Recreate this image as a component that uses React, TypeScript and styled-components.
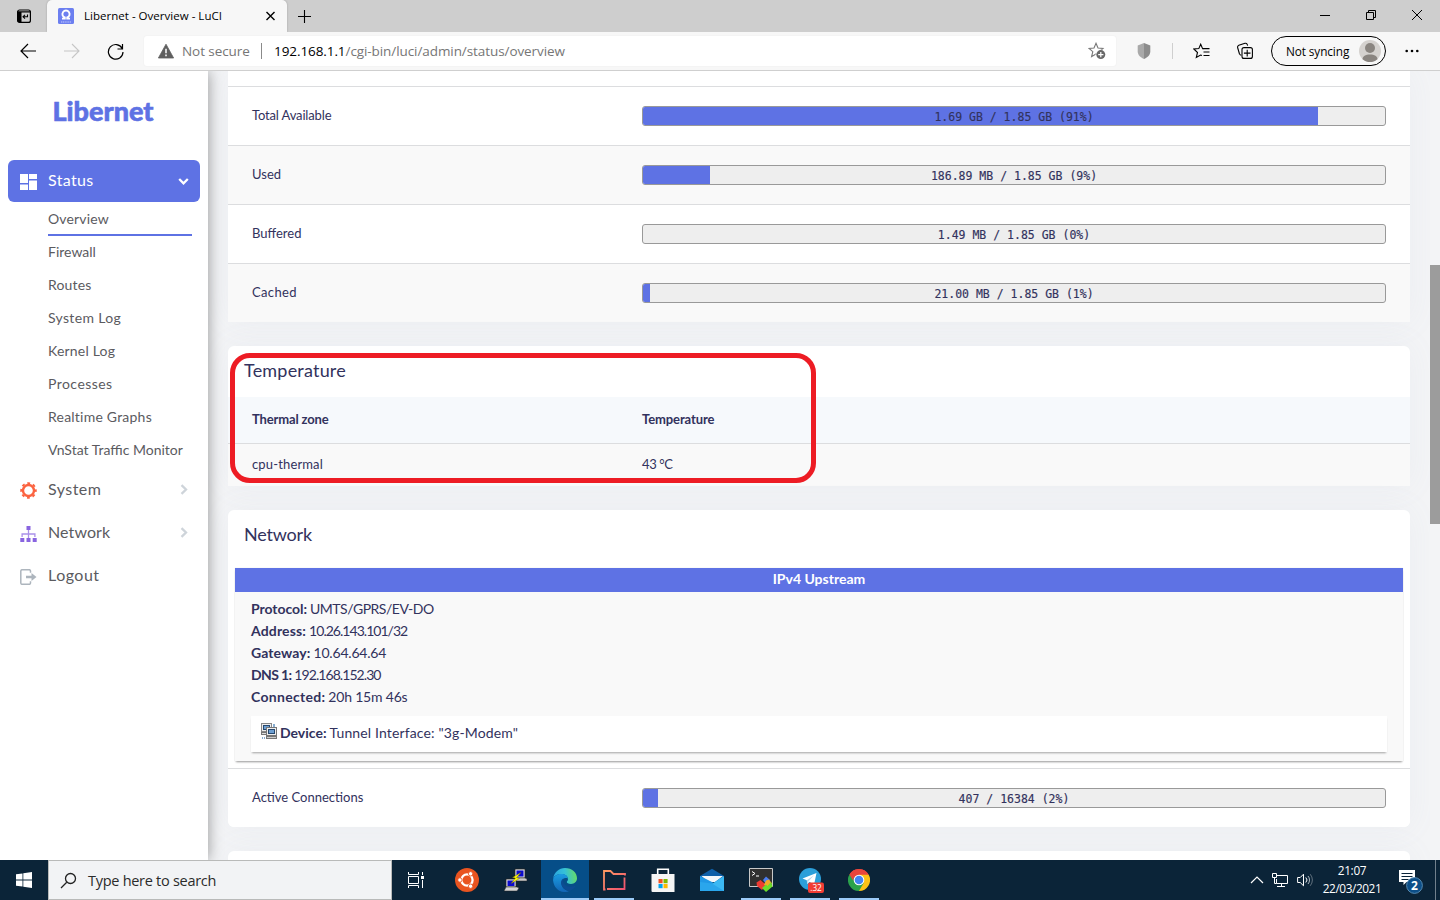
import React from "react";
import styled, { createGlobalStyle } from "styled-components";

const UI = `"Open Sans", "Noto Sans", sans-serif`;
const BRAND = "#5e72e4";

const Global = createGlobalStyle`
  * { box-sizing: border-box; }
  body { margin: 0; overflow: hidden; }
  #root { width: 1440px; height: 900px; }
  svg { display: block; flex: none; }
`;

const Screen = styled.div`
  width: 1440px;
  height: 900px;
  display: flex;
  flex-direction: column;
  overflow: hidden;
  font-family: ${UI};
  color: #000;
`;

/* ---------- text helper ---------- */
const Text = styled.span<{ $ls?: number }>`
  white-space: nowrap;
  letter-spacing: ${(p) => p.$ls ?? 0}px;
`;

/* ---------- browser chrome ---------- */
const TabStrip = styled.header`
  flex: none;
  height: 32px;
  background: #cecece;
  display: flex;
  align-items: flex-start;
`;
const TabActions = styled.div`
  width: 47px;
  height: 32px;
  display: flex;
  align-items: center;
  justify-content: center;
`;
const Tab = styled.div`
  width: 240px;
  height: 32px;
  border-radius: 5px 5px 0 0;
  background: #f7f7f7;
  box-shadow: 0 0 2px rgba(0, 0, 0, 0.25);
  clip-path: inset(-2px -2px 0 -2px);
  display: flex;
  align-items: center;
  padding: 0 11px 0 11px;
  font-size: 11.5px;
`;
const TabTitle = styled(Text)`
  flex: 1;
  margin: -2px 0 0 10px;
`;
const NewTab = styled.div`
  width: 35px;
  height: 32px;
  display: flex;
  align-items: center;
  justify-content: center;
`;
const WindowButtons = styled.div`
  margin-left: auto;
  display: flex;
  height: 29px;
`;
const WindowButton = styled.div`
  width: 46px;
  display: flex;
  align-items: center;
  justify-content: center;
`;
const Toolbar = styled.div`
  flex: none;
  height: 39px;
  background: #f7f7f7;
  border-bottom: 1px solid #cfcfcf;
  display: flex;
  align-items: center;
`;
const ToolIcon = styled.div<{ $w: number }>`
  width: ${(p) => p.$w}px;
  height: 30px;
  display: flex;
  align-items: center;
  justify-content: center;
`;
const NavButtons = styled.div`
  width: 144px;
  padding-left: 6px;
  display: flex;
`;
const AddressBar = styled.div`
  width: 972px;
  height: 30px;
  background: #fff;
  border-radius: 3px;
  box-shadow: 0 0 2px rgba(0, 0, 0, 0.06);
  display: flex;
  align-items: center;
  padding: 0 10px 0 14px;
  font-size: 13.5px;
  color: #767676;
  b { font-weight: 400; color: #000; }
`;
const Insecure = styled(Text)`
  margin-left: 8px;
  width: 80px;
  line-height: 16px;
  border-right: 1px solid #8a8a8a;
`;
const Url = styled(Text)`
  flex: 1;
  margin-left: 12px;
`;
const ToolDivider = styled.div`
  width: 1px;
  height: 16px;
  background: #cfcfcf;
`;
const Profile = styled.div`
  width: 115px;
  height: 30px;
  border: 1px solid #000;
  border-radius: 15px;
  display: flex;
  align-items: center;
  justify-content: space-between;
  padding: 0 4px 0 14px;
  font-size: 11.8px;
  > span { margin-top: -1px; }
`;

/* ---------- page ---------- */
const Page = styled.div`
  height: 789px;
  flex: none;
  display: flex;
  background: #f3f4f6;
  overflow: hidden;
  font-family: Lato, sans-serif;
`;
const Sidebar = styled.aside`
  width: 208px;
  flex: none;
  background: #fff;
  box-shadow: 0 0 14px rgba(0, 0, 0, 0.4);
  padding: 0 8px;
  z-index: 1;
`;
const Brand = styled.div`
  height: 89px;
  padding: 24px 2px 0 0;
  text-align: center;
  font: 900 27px/32px Lato, sans-serif;
  color: ${BRAND};
  -webkit-text-stroke: 0.6px ${BRAND};
`;
const MenuItem = styled.div<{ $active?: boolean }>`
  height: ${(p) => (p.$active ? 42 : 43)}px;
  border-radius: 6px;
  background: ${(p) => (p.$active ? BRAND : "transparent")};
  color: ${(p) => (p.$active ? "#fff" : "#5b5b5f")};
  display: flex;
  align-items: center;
  padding: 0 11px 0 12px;
  font-size: 16px;
  svg:first-child { margin-top: 2px; }
`;
const MenuLabel = styled(Text)`
  flex: 1;
  margin: -3px 0 0 11px;
`;
const SubMenu = styled.nav`
  padding: 1px 0 1px 40px;
`;
const SubItem = styled.div<{ $active?: boolean }>`
  width: 144px;
  height: 33px;
  line-height: 32px;
  font-size: 14px;
  color: #5b5b5f;
  border-bottom: 2px solid ${(p) => (p.$active ? BRAND : "transparent")};
`;
const Main = styled.main`
  width: 1222px;
  flex: none;
  padding: 0 20px;
  display: flex;
  flex-direction: column;
  gap: 24px;
  color: #32325d;
`;
const Card = styled.section<{ $flatTop?: boolean; $flatBottom?: boolean }>`
  flex: none;
  overflow: hidden;
  background: #fff;
  border-radius: ${(p) => {
    const top = p.$flatTop ? "0 0" : "6px 6px";
    const bottom = p.$flatBottom ? "0 0" : "6px 6px";
    return `${top} ${bottom}`;
  }};
  box-shadow: 0 0 32px rgba(136, 152, 190, 0.07);
`;
const CardTitle = styled.h3<{ $h: number }>`
  margin: 0;
  height: ${(p) => p.$h}px;
  padding-left: 16px;
  font-size: 18px;
  font-weight: 400;
  line-height: 48px;
`;
const Row = styled.div<{ $alt?: boolean; $h?: number; $head?: boolean }>`
  height: ${(p) => p.$h ?? 59}px;
  border-top: ${(p) => (p.$head ? "0" : "1px solid #dcdddf")};
  background: ${(p) => (p.$head ? "#f6f9fc" : p.$alt ? "#f9f9f9" : "#fff")};
  font-weight: ${(p) => (p.$head ? 700 : 400)};
  font-size: 13px;
  display: grid;
  grid-template-columns: 390px 744px;
  align-items: center;
  padding: 0 24px;
  > span { margin-top: -2px; }
`;
const RowSpacer = styled.div`
  height: 15px;
`;
const Bar = styled.div`
  height: 20px;
  border: 1px solid #999;
  border-radius: 3px;
  background: #eee;
  display: grid;
  overflow: hidden;
  > * { grid-area: 1 / 1; }
`;
const Fill = styled.div`
  background: ${BRAND};
`;
const BarText = styled.div`
  text-align: center;
  font: 11.5px/20px "DejaVu Sans Mono", monospace;
  -webkit-text-stroke: 0.15px currentColor;
`;
const IfaceBox = styled.div`
  margin: 0 7px 7px;
  height: 193px;
  background: #f9f9f9;
  box-shadow: 0 2px 2px -1px rgba(0, 0, 0, 0.4), 0 0 1px rgba(0, 0, 0, 0.12);
`;
const IfaceHead = styled.div`
  height: 24px;
  line-height: 22px;
  background: ${BRAND};
  color: #fff;
  text-align: center;
  font-weight: 700;
  font-size: 14px;
`;
const IfaceBody = styled.div`
  padding: 6px 16px 0;
  font-size: 14px;
`;
const Info = styled.div`
  height: 22px;
  line-height: 22px;
  white-space: nowrap;
  display: flex;
  gap: 3px;
`;
const Key = styled(Text)`
  font-weight: 700;
`;
const Device = styled.div`
  margin-top: 8px;
  height: 36px;
  background: #fff;
  box-shadow: 0 2px 2px -1px rgba(0, 0, 0, 0.35);
  display: flex;
  align-items: center;
  padding-left: 10px;
  gap: 3px;
  svg { margin-top: -6px; }
  > span { margin-top: -3px; }
`;
const ScrollTrack = styled.div`
  width: 10px;
  flex: none;
  padding-top: 194px;
  background: #f3f4f6;
`;
const ScrollThumb = styled.div`
  height: 259px;
  background: #9c9c9c;
`;
const Marker = styled.div`
  position: absolute;
  left: 230px;
  top: 353px;
  width: 586px;
  height: 130px;
  border: 5px solid #ed1c24;
  border-radius: 20px;
  z-index: 3;
`;

/* ---------- taskbar ---------- */
const Taskbar = styled.footer`
  height: 40px;
  flex: none;
  background: #0b2438;
  display: flex;
  color: #fff;
  position: relative;
  z-index: 2;
`;
const TaskCell = styled.div<{ $w?: number; $active?: boolean; $open?: boolean }>`
  width: ${(p) => p.$w ?? 49}px;
  height: 40px;
  padding-right: ${(p) => (p.$w ? 0 : 1)}px;
  display: flex;
  align-items: center;
  justify-content: center;
  background: ${(p) =>
    p.$active
      ? "linear-gradient(#9ccbf8, #9ccbf8) 0 38px / 48px 2px no-repeat, linear-gradient(#064e88, #064e88) 0 0 / 48px 40px no-repeat"
      : p.$open
        ? "linear-gradient(#9ccbf8, #9ccbf8) 4px 38px / 40px 2px no-repeat"
        : "none"};
`;
const SearchBox = styled.div`
  width: 344px;
  height: 40px;
  background: #f2f3f5;
  border: 1px solid #b9bab9;
  display: flex;
  align-items: center;
  padding-left: 11px;
  gap: 11px;
  font-size: 14.5px;
  color: #2b2b2b;
`;
const Apps = styled.div`
  display: flex;
  padding-left: 3px;
`;
const Tray = styled.div`
  margin-left: auto;
  display: flex;
  align-items: center;
  padding-right: 4px;
`;
const TrayIcons = styled.div`
  display: flex;
  align-items: center;
  gap: 8px;
`;
const Clock = styled.div`
  width: 78px;
  padding: 0 2px 2px 0;
  text-align: center;
  font-size: 11.8px;
  line-height: 18px;
`;
const Notice = styled.div`
  width: 44px;
  padding: 4px 0 0 7px;
  border-right: 1px solid #71808c;
  height: 40px;
  display: flex;
  align-items: center;
`;

/* ---------- drawings ---------- */
const Line = ({ d, w = 24, h = 24, c = "#000", s = 1 }: { d: string; w?: number; h?: number; c?: string; s?: number }) => (
  <svg width={w} height={h} viewBox={`0 0 ${w} ${h}`} fill="none" stroke={c} strokeWidth={s}>
    <path d={d} />
  </svg>
);

const TabActionsIcon = () => (
  <svg width="16" height="16" viewBox="0 0 16 16">
    <rect x="1.6" y="2" width="12.8" height="12.4" rx="2" fill="none" stroke="#000" strokeWidth="1.2" />
    <path d="M1.5 3.2h13v1.3h-9v9.8H3a1.5 1.5 0 0 1-1.5-1.5z" />
    <path d="M11.5 6.5v2.2H7.2M9 6.8 7 8.7l2 1.9" fill="none" stroke="#000" strokeWidth="1.1" />
  </svg>
);
const Favicon = () => (
  <svg width="16" height="16" viewBox="0 0 16 16">
    <rect width="16" height="16" rx="1.5" fill="#6c7ff0" />
    <path d="M4 10.600h2.800V9.500a3.600 3.600 0 1 1 2.400 0v1.100H12" fill="none" stroke="#fff" strokeWidth="1.900" />
    <path d="M3 14h10" stroke="#c5ccff" strokeWidth="1.2" strokeDasharray="1.2 .6" />
  </svg>
);
const WarningIcon = () => (
  <svg width="16" height="16" viewBox="0 0 16 16">
    <path d="M8 1.2 15.6 15H.4z" fill="#5f5f5f" stroke="#5f5f5f" strokeLinejoin="round" strokeWidth=".8" />
    <path d="M8 5.8v4.4M8 11.6v1.6" stroke="#fff" strokeWidth="1.5" />
  </svg>
);
const STAR = "M8 1.3 10 6l5 .4-3.8 3.3 1.2 4.9L8 12l-4.4 2.6 1.2-4.9L1 6.4 6 6z";
const StarAdd = () => (
  <svg width="18" height="18" viewBox="0 0 18 18">
    <path d={STAR} fill="none" stroke="#777" strokeWidth="1.1" />
    <circle cx="12.8" cy="12.6" r="5.2" fill="#fff" />
    <circle cx="12.8" cy="12.6" r="4.5" fill="#686868" />
    <path d="M12.8 10v5.2M10.2 12.6h5.2" stroke="#fff" strokeWidth="1.2" />
  </svg>
);
const Shield = () => (
  <svg width="14" height="16" viewBox="0 0 14 16">
    <path d="M7 0 .7 2.4v6C.7 12 4 14.700 7 16z" fill="#a9a9a9" />
    <path d="M7 0l6.300 2.400v6C13.300 12 10 14.700 7 16z" fill="#8c8c8c" />
  </svg>
);
const Favorites = () => (
  <svg width="17" height="16" viewBox="0 0 17 16" fill="none" stroke="#000" strokeWidth="1.1">
    <path d="M10.300 6 9.600 5.600 7.700 1.200 5.800 5.600l-5 .4 3.700 3.500-1.200 5 4.300-2.500L9 12.500" />
    <path d="M10 5.600h6.500M10.500 9h6M10.500 12.500h6" />
  </svg>
);
const Collections = () => (
  <svg width="18" height="18" viewBox="0 0 18 18" fill="none" stroke="#000" strokeWidth="1.1">
    <path d="M3.500 12 1.600 5.500a2 2 0 0 1 1.200-2.300L9 1.300a1.800 1.800 0 0 1 2.300 1.300l.3 1" />
    <path d="M3.500 12a3 3 0 0 0 1.800 1.200" />
    <rect x="6" y="5.600" width="10.400" height="10.800" rx="2" />
    <path d="M11.200 7.800v6.600M7.900 11.100h6.600" />
  </svg>
);
const Avatar = () => (
  <svg width="22" height="22" viewBox="0 0 22 22">
    <circle cx="11" cy="11" r="11" fill="#d5d2cf" />
    <circle cx="11" cy="8" r="5" fill="#8a8580" />
    <path d="M3.500 19.200c0-3 3-4.700 7.500-4.700s7.500 1.700 7.500 4.700a11 11 0 0 1-15 0z" fill="#8a8580" />
  </svg>
);
const Dashboard = () => (
  <svg width="17" height="16" viewBox="0 0 17 16" fill="#fff">
    <path d="M0 0h8v9H0zM9 0h8v5H9zM0 10.500h8V16H0zM9 6.500h8V16H9z" />
  </svg>
);
const Gear = () => (
  <svg width="17" height="17" viewBox="0 0 17 17" fill="none" stroke="#fb6340">
    <circle cx="8.500" cy="8.500" r="5.500" strokeWidth="2.400" />
    <circle cx="8.500" cy="8.500" r="7.300" strokeWidth="1.900" strokeDasharray="2.867 2.867" strokeDashoffset="1.430" />
  </svg>
);
const Sitemap = () => (
  <svg width="17" height="16" viewBox="0 0 17 16">
    <path d="M6.500 0h4v4h-4zM.3 12h4v4h-4zM6.500 12h4v4h-4zM12.700 12h4v4h-4z" fill="#8965e0" />
    <path d="M8.500 4v8M2.100 11V8h12.800v3" fill="none" stroke="#ab91e9" strokeWidth="1.300" />
  </svg>
);
const Exit = () => (
  <svg width="17" height="16" viewBox="0 0 17 16">
    <path d="M10.500 3.800V2a1.300 1.300 0 0 0-1.300-1.300H2A1.300 1.300 0 0 0 .8 2v12A1.300 1.300 0 0 0 2 15.300h7.200a1.300 1.300 0 0 0 1.300-1.300v-1.800" fill="none" stroke="#adb5bd" strokeWidth="1.500" />
    <path d="M6 6.800h5.500V4l5 4-5 4V9.200H6z" fill="#adb5bd" />
  </svg>
);
const DeviceIcon = () => (
  <svg width="16" height="16" viewBox="0 0 16 16" shapeRendering="crispEdges">
    <path d="M0 0h11v9H0z" fill="#888" />
    <path d="M1 1h9v7H1z" fill="#eee" />
    <path d="M2 2h7v5H2z" fill="#26486e" />
    <path d="M3 3h5v3H3z" fill="#6d9fd2" />
    <path d="M0 9h6v3H0z" fill="#777" />
    <path d="M1 10h5v1H1z" fill="#ddd" />
    <path d="M12 1h2v3h-2zM1 14h1v2H1zM3 14h1v2H3z" fill="#88aed2" />
    <path d="M5 4h11v9H5z" fill="#777" />
    <path d="M6 5h9v7H6z" fill="#eee" />
    <path d="M7 6h7v5H7z" fill="#26486e" />
    <path d="M8 7h5v3H8z" fill="#6d9fd2" />
    <path d="M5 13h11v3H5z" fill="#777" />
    <path d="M6 14h9v1H6z" fill="#ccc" />
  </svg>
);
const WinLogo = () => (
  <svg width="16" height="16" viewBox="0 0 16 16" fill="#fff">
    <path d="M0 2.300 6.500 1.400v6.200H0zM7.300 1.300 16 0v7.600H7.300zM0 8.400h6.500v6.200L0 13.700zM7.300 8.400H16V16l-8.700-1.300z" />
  </svg>
);
const TaskView = () => (
  <svg width="16" height="16" viewBox="0 0 16 16" fill="none" stroke="#fff" strokeWidth="1">
    <path d="M.5 0v2.500h10V0M.5 4.500h10v7H.5zM.5 16v-2.500h10V16M14.500 0v3M14.500 8v8" />
    <path d="M13 4h3v3h-3z" fill="#fff" stroke="none" />
  </svg>
);
const Ubuntu = () => (
  <svg width="24" height="24" viewBox="0 0 24 24">
    <circle cx="12" cy="12" r="12" fill="#e95420" />
    <circle cx="12" cy="12" r="5.600" fill="none" stroke="#fff" strokeWidth="2.300" />
    <g fill="#fff" stroke="#e95420" strokeWidth=".9">
      <circle cx="4.900" cy="12" r="2.200" />
      <circle cx="15.600" cy="5.800" r="2.200" />
      <circle cx="15.600" cy="18.200" r="2.200" />
    </g>
  </svg>
);
const Putty = () => (
  <svg width="24" height="24" viewBox="0 0 24 24">
    <path d="M11 1h10v9H11z" fill="#ddd" stroke="#222" strokeWidth=".7" />
    <path d="M12.500 2.500h7v6h-7z" fill="#0b0bcc" />
    <path d="M11 10h10l2 1v2H11z" fill="#c8c8c8" stroke="#222" strokeWidth=".5" />
    <path d="M2 11h10v8H2z" fill="#ddd" stroke="#222" strokeWidth=".7" />
    <path d="M3.500 12.500h7v5.500h-7z" fill="#0b0bcc" />
    <path d="M2 19h11l2 1-2 3H0l1-2z" fill="#d4d4d4" stroke="#222" strokeWidth=".5" />
    <path d="M17 4.500l-8.500 5 3 .6L7 15.500l8.500-5-3-.8z" fill="#ff0" stroke="#776600" strokeWidth=".4" />
  </svg>
);
const Edge = () => (
  <svg width="24" height="24" viewBox="0 0 24 24">
    <defs>
      <linearGradient id="eg1" x1="0" y1=".4" x2="1" y2=".3">
        <stop offset="0" stopColor="#2aa5e0" />
        <stop offset=".5" stopColor="#35c1d8" />
        <stop offset="1" stopColor="#68dc62" />
      </linearGradient>
      <linearGradient id="eg2" x1="0" y1="0" x2="0" y2="1">
        <stop offset="0" stopColor="#1b9de2" />
        <stop offset="1" stopColor="#1264b4" />
      </linearGradient>
    </defs>
    <path d="M.2 10.500C1 4.500 6 0 12 0c7 0 12 4.800 12 10.300 0 3.300-2.500 5.700-6 5.700-2.800 0-4.200-1-4.200-1.900 0-.6 1.200-1.200 1.200-3C15 8.500 12.500 6 8.500 6 4 6 1 8.300.2 10.500z" fill="url(#eg1)" />
    <path d="M.1 12.500C-.2 8.500 3.800 6 8.300 6c3.800 0 6.300 2 6.600 4.500-4-1.500-7 1.500-6.600 5.200.4 4.500 4.700 6.900 7.700 7.600C8.500 26 .8 21 .1 12.500z" fill="url(#eg2)" />
    <path d="M10 10.800c-2 1.300-2 3.700-1.500 5.700 1.300 4.400 5.500 6.600 9 6 2-.7 4-2.300 5-4.200.3-.6-.2-.8-.7-.5-6 2.800-13-.8-11.800-7z" fill="#0d4c92" />
  </svg>
);
const Folder = () => (
  <svg width="24" height="24" viewBox="0 0 24 24" fill="none">
    <defs>
      <linearGradient id="fg" x1="0" y1="0" x2="1" y2="1">
        <stop offset="0" stopColor="#ff9a62" />
        <stop offset="1" stopColor="#ef5070" />
      </linearGradient>
    </defs>
    <path d="M3.500 21.500H2V3h6.500l3 3H23V7.500M22.500 9.500v11.500H5" stroke="url(#fg)" strokeWidth="1.800" />
  </svg>
);
const Store = () => (
  <svg width="24" height="24" viewBox="0 0 24 24">
    <path d="M6.700 7V1.200h10.600V7" fill="none" stroke="#fff" strokeWidth="1.600" />
    <path d="M.5 6h23v18h-22a1 1 0 0 1-1-1z" fill="#f5f5f5" />
    <path d="M7.500 11H11.600v4.200H7.500z" fill="#f25022" />
    <path d="M12.500 11h4.100v4.200h-4.100z" fill="#7fba00" />
    <path d="M7.500 16h4.100v4.200H7.500z" fill="#00a4ef" />
    <path d="M12.500 16h4.100v4.200h-4.100z" fill="#ffb900" />
  </svg>
);
const Mail = () => (
  <svg width="24" height="24" viewBox="0 0 24 24">
    <path d="M0 8 12 .800 24 8v6H0z" fill="#0e5fa8" />
    <path d="M1.500 8h21.500L15 14H8z" fill="#f3f7fa" />
    <path d="M0 8l14 7L0 23z" fill="#2098e6" />
    <path d="M24 8v15H0l14-8.500z" fill="#3bb8f3" />
    <path d="M0 14l12 1.500L24 23H0z" fill="#2aa6ec" />
  </svg>
);
const Terminal = () => (
  <svg width="24" height="24" viewBox="0 0 24 24">
    <path d="M.5.500h23v18H.5z" fill="#303030" stroke="#c8c8c8" />
    <path d="M3 3.500l3 2-3 2M7 8h3" fill="none" stroke="#fff" />
    <path d="M14 12l3-3.500 4 3.500-4 4z" fill="#4b7df0" />
    <path d="M7.500 14.500 11.500 12l5.500 5-4 5-5-4z" fill="#ee3b32" />
    <path d="M17 12.500l3-1 3 4-5 4-3-3z" fill="#f0a929" />
    <path d="M13 20l4-3.500 1.500 1.500L22 14l1.500 4.500L17 24z" fill="#6ddc2b" />
  </svg>
);
const TelegramBox = styled.svg`
  margin-left: 4px;
`;
const Telegram = () => (
  <TelegramBox width="28" height="26" viewBox="0 0 28 26">
    <circle cx="12" cy="12" r="11" fill="#2c9fd9" />
    <path d="M4.500 11.500 18.500 6 16 18l-4.500-3.200-2.200 2.200-.5-3.700z" fill="#fff" />
    <path d="M8.800 13.300 16 8.300l-5.500 6-1.200 2.700z" fill="#b9d7ea" />
    <rect x="10" y="15.500" width="16" height="10.500" rx="2" fill="#f23c34" />
    <text x="18" y="23.800" fontSize="8.200" fill="#fff" textAnchor="middle" fontFamily="Open Sans">.32</text>
  </TelegramBox>
);
const Chrome = () => (
  <svg width="22" height="22" viewBox="0 0 22 22">
    <path d="M11 11 1.470 5.500A11 11 0 0 1 20.530 5.500z" fill="#e8453c" />
    <path d="M11 11V5.500h9.530A11 11 0 0 1 11 22z" fill="#fbc116" />
    <path d="M11 11 1.470 5.500A11 11 0 0 0 11 22l4.800-8.300z" fill="#2ba24c" />
    <path d="M1.470 5.500A11 11 0 0 1 20.530 5.500H11A5.500 5.500 0 0 0 6.200 8.300L5 11.500z" fill="#e8453c" />
    <circle cx="11" cy="11" r="5.300" fill="#fff" />
    <circle cx="11" cy="11" r="4.300" fill="#4285f4" />
  </svg>
);
const Monitor = () => (
  <svg width="17" height="15" viewBox="0 0 17 15" fill="none" stroke="#fff">
    <path d="M5 2.500h10.500v8H4.500V6M5 13.500h8M9.500 11v3" />
    <path d="M.5.500h4v4h-4zM2.500 5v5.500h2" />
  </svg>
);
const Speaker = () => (
  <svg width="17" height="14" viewBox="0 0 17 14" fill="none" stroke="#fff">
    <path d="M.6 4.500h2.600L6.500 1.200v11.600L3.200 9.500H.6z" />
    <path d="M8.800 4.500a3.500 3.500 0 0 1 0 5" />
    <path d="M11 3a6 6 0 0 1 0 8" stroke="#b0bac2" />
    <path d="M13.200 1.200a8.800 8.800 0 0 1 0 11.600" stroke="#61717e" />
  </svg>
);
const NoticeIcon = () => (
  <svg width="26" height="26" viewBox="0 0 26 26">
    <path d="M0 1h16v12H7.500L4.500 16v-3H0z" fill="#fff" />
    <path d="M2.500 4.500h11M2.500 7.500h11M2.500 10.500h7" stroke="#0b2438" />
    <circle cx="15.500" cy="16.500" r="7.900" fill="#0d4f88" stroke="#5c91b8" strokeWidth=".9" />
    <text x="15.500" y="20.800" fontSize="12" fontWeight="700" fill="#fff" textAnchor="middle" fontFamily="Open Sans">2</text>
  </svg>
);

/* ---------- data ---------- */
const memory = [
  { label: "Total Available", ls: -0.15, pct: 91, text: "1.69 GB / 1.85 GB (91%)" },
  { label: "Used", ls: 0, pct: 9.03, text: "186.89 MB / 1.85 GB (9%)" },
  { label: "Buffered", ls: 0, pct: 0, text: "1.49 MB / 1.85 GB (0%)" },
  { label: "Cached", ls: 0.35, pct: 1, text: "21.00 MB / 1.85 GB (1%)" },
];
const links: [string, number][] = [
  ["Overview", 0.15],
  ["Firewall", 0],
  ["Routes", 0.15],
  ["System Log", 0.33],
  ["Kernel Log", 0.2],
  ["Processes", 0.45],
  ["Realtime Graphs", 0.22],
  ["VnStat Traffic Monitor", 0],
];
const upstream: [string, number, string, number][] = [
  ["Protocol:", -0.05, "UMTS/GPRS/EV-DO", -0.48],
  ["Address:", 0.15, "10.26.143.101/32", -0.97],
  ["Gateway:", 0.1, "10.64.64.64", -0.2],
  ["DNS 1:", -0.65, "192.168.152.30", -0.93],
  ["Connected:", 0.3, "20h 15m 46s", -0.2],
];

const Progress = ({ pct, text }: { pct: number; text: string }) => (
  <Bar>
    <Fill style={{ width: `${pct}%` }} />
    <BarText>{text}</BarText>
  </Bar>
);

export default function App() {
  return (
    <Screen>
      <Global />
      <TabStrip>
        <TabActions><TabActionsIcon /></TabActions>
        <Tab>
          <Favicon />
          <TabTitle $ls={0.02}>Libernet - Overview - LuCI</TabTitle>
          <Line d="M2.500 2l8 8M10.500 2l-8 8" w={12} h={12} s={1.4} />
        </Tab>
        <NewTab><Line d="M7.500 1v13M1 7.500h13" w={15} h={15} s={1.1} /></NewTab>
        <WindowButtons>
          <WindowButton><Line d="M0 5.500h10" w={10} h={10} /></WindowButton>
          <WindowButton><Line d="M.5 2.500h7v7h-7zM2.500 2.500v-2h7v7h-2" w={10} h={10} /></WindowButton>
          <WindowButton><Line d="M0 0l10 10M10 0L0 10" w={10} h={10} /></WindowButton>
        </WindowButtons>
      </TabStrip>
      <Toolbar>
        <NavButtons>
          <ToolIcon $w={44}><Line d="M16 8H1M8 1L1 8l7 7" w={17} h={16} s={1.2} /></ToolIcon>
          <ToolIcon $w={43}><Line d="M1 8h15M9 1l7 7-7 7" w={17} h={16} c="#c6c6c6" s={1.1} /></ToolIcon>
          <ToolIcon $w={45}><Line d="M15.200 5.500A7.300 7.300 0 1 0 16 9M15.500 1v5h-5" w={17} h={17} s={1.2} /></ToolIcon>
        </NavButtons>
        <AddressBar>
          <WarningIcon />
          <Insecure $ls={-0.08}>Not secure</Insecure>
          <Url $ls={-0.08}><b>192.168.1.1</b>/cgi-bin/luci/admin/status/overview</Url>
          <StarAdd />
        </AddressBar>
        <ToolIcon $w={56}><Shield /></ToolIcon>
        <ToolDivider />
        <ToolIcon $w={56}><Favorites /></ToolIcon>
        <ToolIcon $w={32}><Collections /></ToolIcon>
        <ToolIcon $w={10} />
        <Profile><Text $ls={-0.1}>Not syncing</Text><Avatar /></Profile>
        <ToolIcon $w={52}>
          <svg width="14" height="4" viewBox="0 0 14 4"><circle cx="1.700" cy="2" r="1.300" /><circle cx="7" cy="2" r="1.300" /><circle cx="12.300" cy="2" r="1.300" /></svg>
        </ToolIcon>
      </Toolbar>

      <Page>
        <Sidebar>
          <Brand><Text>Libernet</Text></Brand>
          <MenuItem $active>
            <Dashboard /><MenuLabel $ls={0.35}>Status</MenuLabel>
            <Line d="M1.200 3l4.300 4.300L9.800 3" w={11} h={10} c="#fff" s={2.300} />
          </MenuItem>
          <SubMenu>
            {links.map(([l, ls], i) => <SubItem key={l} $active={i === 0}><Text $ls={ls}>{l}</Text></SubItem>)}
          </SubMenu>
          <MenuItem>
            <Gear /><MenuLabel $ls={0.45}>System</MenuLabel>
            <Line d="M2.500 1.200L7 5.500 2.500 9.800" w={10} h={11} c="#ced4da" s={2.300} />
          </MenuItem>
          <MenuItem>
            <Sitemap /><MenuLabel $ls={0.1}>Network</MenuLabel>
            <Line d="M2.500 1.200L7 5.500 2.500 9.800" w={10} h={11} c="#ced4da" s={2.300} />
          </MenuItem>
          <MenuItem><Exit /><MenuLabel $ls={0.5}>Logout</MenuLabel></MenuItem>
        </Sidebar>
        <Main>
          <Card $flatTop $flatBottom>
            <RowSpacer />
            {memory.map((m, i) => (
              <Row key={m.label} $alt={i % 2 === 1}><Text $ls={m.ls}>{m.label}</Text><Progress pct={m.pct} text={m.text} /></Row>
            ))}
          </Card>
          <Card $flatBottom>
            <CardTitle $h={51}><Text $ls={0.2}>Temperature</Text></CardTitle>
            <Row $head $h={46}><Text $ls={-0.15}>Thermal zone</Text><Text $ls={-0.1}>Temperature</Text></Row>
            <Row $alt $h={43}><Text $ls={0.15}>cpu-thermal</Text><Text $ls={-0.4}>43 °C</Text></Row>
          </Card>
          <Card>
            <CardTitle $h={58}><Text $ls={-0.2}>Network</Text></CardTitle>
            <IfaceBox>
              <IfaceHead><Text>IPv4 Upstream</Text></IfaceHead>
              <IfaceBody>
                {upstream.map(([k, kls, v, vls]) => (
                  <Info key={k}><Key $ls={kls}>{k}</Key><Text $ls={vls}>{v}</Text></Info>
                ))}
                <Device><DeviceIcon /><Key>Device:</Key><Text $ls={0.14}>Tunnel Interface: "3g-Modem"</Text></Device>
              </IfaceBody>
            </IfaceBox>
            <Row><Text>Active Connections</Text><Progress pct={2.03} text="407 / 16384 (2%)" /></Row>
          </Card>
          <Card><CardTitle $h={58} /></Card>
        </Main>
        <ScrollTrack><ScrollThumb /></ScrollTrack>
      </Page>
      <Marker />

      <Taskbar>
        <TaskCell $w={48}><WinLogo /></TaskCell>
        <SearchBox>
          <Line d="M6.500 10.500L1 16M5.500 6.500a5 5 0 1 0 10 0a5 5 0 1 0-10 0" w={17} h={17} c="#222" s={1.300} />
          <Text $ls={-0.28}>Type here to search</Text>
        </SearchBox>
        <TaskCell $w={48}><TaskView /></TaskCell>
        <Apps>
          <TaskCell><Ubuntu /></TaskCell>
          <TaskCell><Putty /></TaskCell>
          <TaskCell $active><Edge /></TaskCell>
          <TaskCell $open><Folder /></TaskCell>
          <TaskCell><Store /></TaskCell>
          <TaskCell><Mail /></TaskCell>
          <TaskCell $open><Terminal /></TaskCell>
          <TaskCell $open><Telegram /></TaskCell>
          <TaskCell $open><Chrome /></TaskCell>
        </Apps>
        <Tray>
          <TrayIcons>
            <Line d="M1 8l6-6 6 6" w={14} h={10} c="#fff" s={1.200} />
            <Monitor />
            <Speaker />
          </TrayIcons>
          <Clock><Text $ls={-0.3}>21:07</Text><br /><Text $ls={-0.4}>22/03/2021</Text></Clock>
          <Notice><NoticeIcon /></Notice>
        </Tray>
      </Taskbar>
    </Screen>
  );
}
